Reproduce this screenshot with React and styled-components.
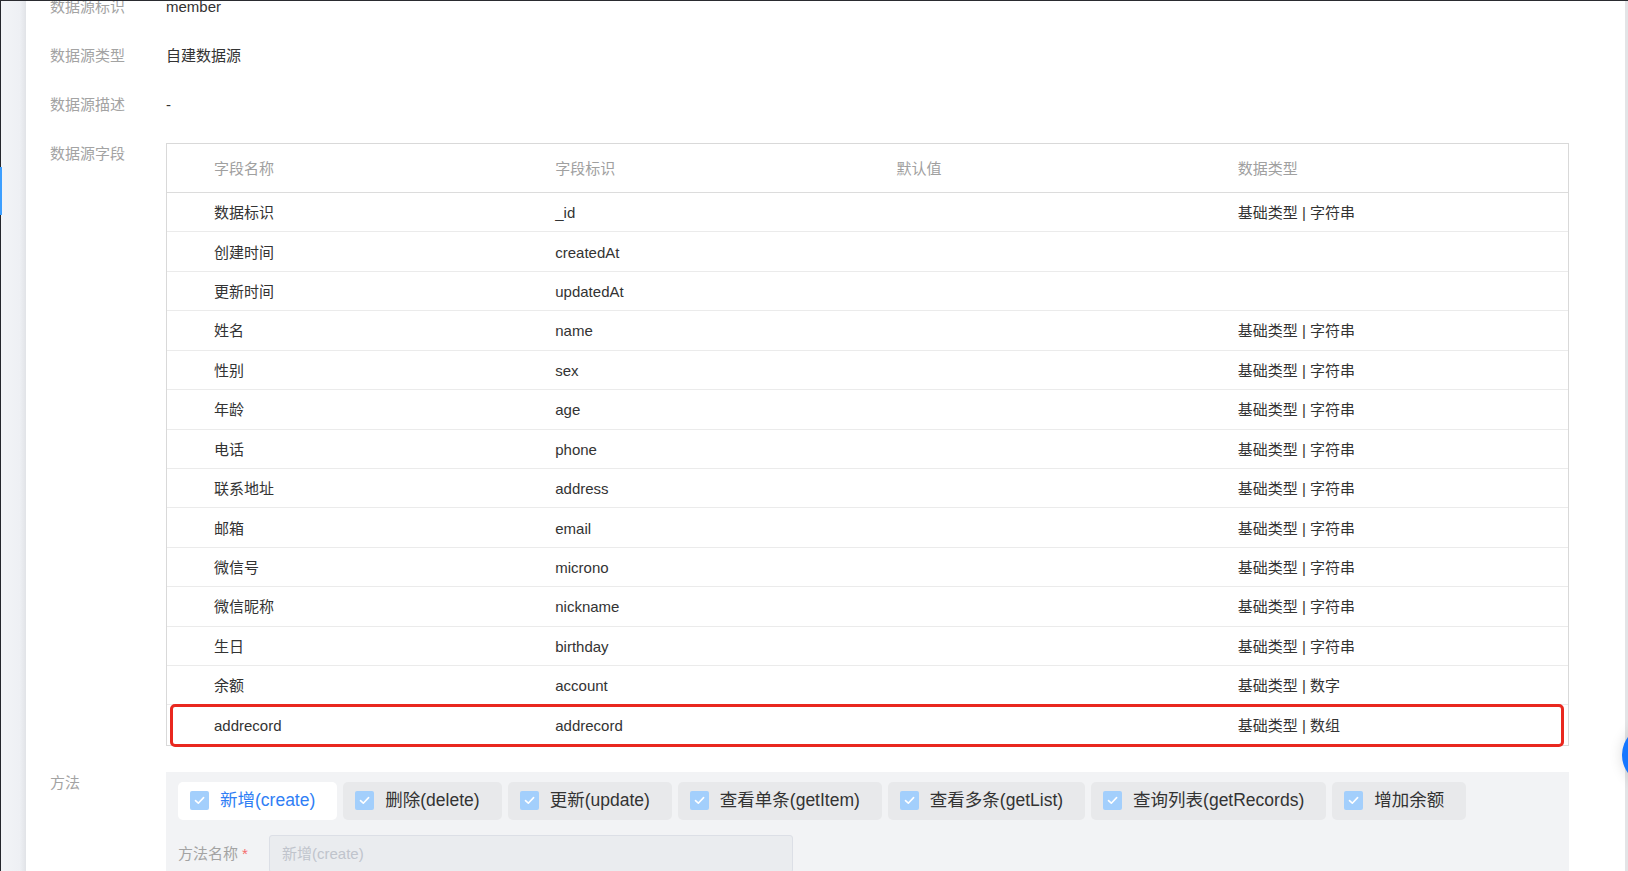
import React from 'react';
import styled, { createGlobalStyle } from 'styled-components';

const GlobalStyle = createGlobalStyle`
  html, body { margin: 0; padding: 0; background: #fff; overflow: hidden; }
  body { font-family: 'Liberation Sans', 'Noto Sans CJK SC', sans-serif; color: #333; }
  * { box-sizing: border-box; }
`;

const Frame = styled.div`
  position: relative;
  display: flex;
  height: 871px;
  border-top: 1px solid #2a2b30;
  overflow: hidden;
`;

const LeftRail = styled.div`
  position: relative;
  flex: none;
  width: 26px;
  display: flex;
`;

const RailEdge = styled.div`
  width: 1px;
  background: #25272d;
`;

const RailBody = styled.div`
  flex: 1;
  background: linear-gradient(to right, #f2f4f7 0%, #eef0f4 75%, #e1e3e7 100%);
`;

const RailMarker = styled.div`
  position: absolute;
  left: 0;
  top: 166px;
  width: 2px;
  height: 48px;
  background: #3d9fff;
`;

const Main = styled.main`
  flex: 1;
  min-width: 0;
  background: #fff;
  padding: 0 56px 0 24px;
`;

const Content = styled.div`
  margin-top: -19px;
`;

const RightRail = styled.div`
  flex: none;
  width: 3px;
  background: #e3e4e6;
`;

const Item = styled.div`
  display: flex;
  padding: 14px 0 ${p => (p.$tight ? '12px' : '13px')};
`;

const Label = styled.div`
  flex: none;
  width: 116px;
  font-size: 15px;
  line-height: 22px;
  color: #a3a3a3;
`;

const Value = styled.div`
  flex: 1;
  min-width: 0;
  font-size: 15px;
  line-height: 22px;
  color: #333;
`;

const Table = styled.div`
  border: 1px solid #d9d9d9;
`;

const Row = styled.div`
  position: relative;
  display: grid;
  grid-template-columns: 36px repeat(4, 1fr);
  align-items: center;
  padding-top: 2px;
  height: ${p => (p.$head ? '49px' : '39.43px')};
  border-bottom: 1px solid ${p => (p.$head ? '#dcdcdc' : '#ebebeb')};
  color: ${p => (p.$head ? '#a0a0a0' : '#333')};
  font-size: 15px;
  &:last-child { border-bottom: none; }
  ${p => p.$flagged && `
    &::after {
      content: '';
      position: absolute;
      top: -1px;
      bottom: -2px;
      left: 3px;
      right: 4px;
      border: 3px solid #e9281f;
      border-radius: 5px;
      pointer-events: none;
    }
  `}
`;

const Cell = styled.div`
  padding-left: 11px;
  white-space: nowrap;
`;

const Panel = styled.div`
  background: #f2f3f5;
  padding: 10px 12px 20px;
`;

const Tabs = styled.div`
  display: flex;
  gap: 6px;
`;

const Tab = styled.div`
  display: flex;
  align-items: center;
  gap: 11px;
  height: 38px;
  padding: 0 22px 1px 12px;
  border-radius: 5px;
  background: ${p => (p.$active ? '#fff' : '#e8e9eb')};
  color: ${p => (p.$active ? '#2f7ef5' : '#333')};
  font-size: 17.5px;
  white-space: nowrap;
`;

const Check = styled.span`
  display: flex;
  align-items: center;
  justify-content: center;
  width: 19px;
  height: 19px;
  border-radius: 2px;
  background: #a3cffc;
`;

const FormRow = styled.div`
  display: flex;
  align-items: center;
  margin-top: 15px;
`;

const FormLabel = styled.label`
  flex: none;
  width: 91px;
  font-size: 15px;
  color: #a3a3a3;
`;

const Star = styled.span`
  color: #f56c6c;
  margin-left: 4px;
`;

const Input = styled.input`
  width: 524px;
  height: 38px;
  padding: 0 12px;
  border: 1px solid #dcdfe6;
  border-radius: 3px;
  background: #eaecef;
  font-family: inherit;
  font-size: 15px;
  &::placeholder { color: #c0c4cc; }
`;

const FloatButton = styled.div`
  position: absolute;
  left: 1622px;
  top: 724px;
  width: 60px;
  height: 60px;
  border-radius: 50%;
  background: #1677ff;
  box-shadow: 0 0 14px rgba(0, 0, 0, 0.14);
`;

const fields = [
  ['数据标识', '_id', '', '基础类型 | 字符串'],
  ['创建时间', 'createdAt', '', ''],
  ['更新时间', 'updatedAt', '', ''],
  ['姓名', 'name', '', '基础类型 | 字符串'],
  ['性别', 'sex', '', '基础类型 | 字符串'],
  ['年龄', 'age', '', '基础类型 | 字符串'],
  ['电话', 'phone', '', '基础类型 | 字符串'],
  ['联系地址', 'address', '', '基础类型 | 字符串'],
  ['邮箱', 'email', '', '基础类型 | 字符串'],
  ['微信号', 'microno', '', '基础类型 | 字符串'],
  ['微信昵称', 'nickname', '', '基础类型 | 字符串'],
  ['生日', 'birthday', '', '基础类型 | 字符串'],
  ['余额', 'account', '', '基础类型 | 数字'],
  ['addrecord', 'addrecord', '', '基础类型 | 数组'],
];

const methods = [
  '新增(create)',
  '删除(delete)',
  '更新(update)',
  '查看单条(getItem)',
  '查看多条(getList)',
  '查询列表(getRecords)',
  '增加余额',
];

const CheckMark = () => (
  <svg width="11" height="9" viewBox="0 0 11 9" fill="none">
    <path d="M1.5 4.6 L4.3 7.2 L9.6 1.6" stroke="#fff" strokeWidth="1.6" strokeLinecap="round" strokeLinejoin="round" />
  </svg>
);

export default function App() {
  return (
    <>
      <GlobalStyle />
      <Frame>
        <LeftRail>
          <RailEdge />
          <RailBody />
          <RailMarker />
        </LeftRail>
        <Main>
          <Content>
            <Item>
              <Label>数据源标识</Label>
              <Value>member</Value>
            </Item>
            <Item>
              <Label>数据源类型</Label>
              <Value>自建数据源</Value>
            </Item>
            <Item>
              <Label>数据源描述</Label>
              <Value>-</Value>
            </Item>
            <Item $tight>
              <Label>数据源字段</Label>
              <Value>
                <Table>
                  <Row $head>
                    <span />
                    <Cell>字段名称</Cell>
                    <Cell>字段标识</Cell>
                    <Cell>默认值</Cell>
                    <Cell>数据类型</Cell>
                  </Row>
                  {fields.map((f, i) => (
                    <Row key={f[1]} $flagged={i === fields.length - 1}>
                      <span />
                      <Cell>{f[0]}</Cell>
                      <Cell>{f[1]}</Cell>
                      <Cell>{f[2]}</Cell>
                      <Cell>{f[3]}</Cell>
                    </Row>
                  ))}
                </Table>
              </Value>
            </Item>
            <Item>
              <Label>方法</Label>
              <Value>
                <Panel>
                  <Tabs>
                    {methods.map((m, i) => (
                      <Tab key={m} $active={i === 0}>
                        <Check><CheckMark /></Check>
                        {m}
                      </Tab>
                    ))}
                  </Tabs>
                  <FormRow>
                    <FormLabel>方法名称<Star>*</Star></FormLabel>
                    <Input disabled placeholder="新增(create)" />
                  </FormRow>
                </Panel>
              </Value>
            </Item>
          </Content>
        </Main>
        <RightRail />
        <FloatButton />
      </Frame>
    </>
  );
}
